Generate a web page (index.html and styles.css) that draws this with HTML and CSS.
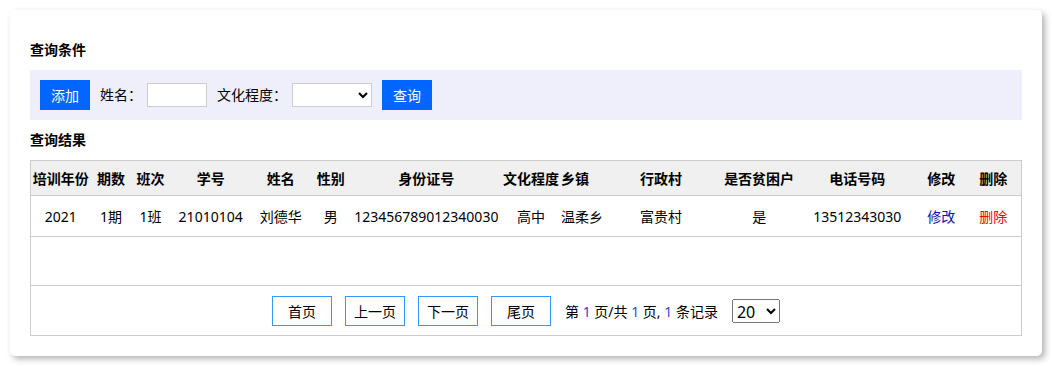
FILE: index.html
```html
<!DOCTYPE html>
<html lang="zh-CN">
<head>
  <meta charset="UTF-8">
  <title>学员查询</title>
  <link rel="stylesheet" href="styles.css">
</head>
<body>

    <!-- 卡片 -->
    <div class="card">

        <h3 class="title">查询条件</h3>

        <!-- 查询条件 -->
        <div class="search-bar">
            <button class="btn-blue">添加</button>
            <label class="lbl">姓名：</label>
            <input type="text" class="txt-name">
            <label class="lbl">文化程度：</label>
            <select class="sel-edu">
                <option></option>
                <option>小学</option>
                <option>初中</option>
                <option>高中</option>
            </select>
            <button class="btn-blue">查询</button>
        </div>

        <h3 class="title">查询结果</h3>

        <!-- 查询结果 -->
        <table class="grid">
            <colgroup>
                <col style="width:60px">
                <col style="width:41px">
                <col style="width:38px">
                <col style="width:82px">
                <col style="width:58px">
                <col style="width:42px">
                <col style="width:149px">
                <col style="width:60px">
                <col style="width:40px">
                <col style="width:120px">
                <col style="width:76px">
                <col style="width:120px">
                <col style="width:48px">
                <col style="width:56px">
            </colgroup>
            <thead>
                <tr>
                    <th>培训年份</th>
                    <th>期数</th>
                    <th>班次</th>
                    <th>学号</th>
                    <th>姓名</th>
                    <th>性别</th>
                    <th>身份证号</th>
                    <th>文化程度</th>
                    <th class="left">乡镇</th>
                    <th>行政村</th>
                    <th>是否贫困户</th>
                    <th>电话号码</th>
                    <th>修改</th>
                    <th>删除</th>
                </tr>
            </thead>
            <tbody>
                <tr class="row">
                    <td>2021</td>
                    <td>1期</td>
                    <td>1班</td>
                    <td>21010104</td>
                    <td>刘德华</td>
                    <td>男</td>
                    <td>123456789012340030</td>
                    <td>高中</td>
                    <td class="left">温柔乡</td>
                    <td>富贵村</td>
                    <td>是</td>
                    <td>13512343030</td>
                    <td><a href="#" class="lnk-edit">修改</a></td>
                    <td><a href="#" class="lnk-del">删除</a></td>
                </tr>
                <tr class="row-empty">
                    <td colspan="14"></td>
                </tr>
                <tr class="row-pager">
                    <td colspan="14">
                        <div class="pager">
                            <button class="btn-page">首页</button>
                            <button class="btn-page">上一页</button>
                            <button class="btn-page">下一页</button>
                            <button class="btn-page">尾页</button>
                            <span class="page-info">第 <em>1</em> 页/共 <em>1</em> 页, <em>1</em> 条记录</span>
                            <select class="sel-size">
                                <option>20</option>
                                <option>50</option>
                                <option>100</option>
                            </select>
                        </div>
                    </td>
                </tr>
            </tbody>
        </table>

    </div>

</body>
</html>
```

FILE: styles.css
```css
body {
  margin: 0;
  font-family: "Noto Sans", "Noto Sans CJK SC", sans-serif;
  font-size: 14px;
  color: #000;
  background-color: #fff;
}

/* 卡片 */
.card {
  margin: 10px;
  padding: 0 20px 20px;
  background-color: #fff;
  border-radius: 5px;
  box-shadow: 3px 3px 6px rgba(0, 0, 0, 0.3);
}

.title {
  margin: 0;
  padding: 30px 0 10px;
  font-size: 14px;
  line-height: 20px;
  font-weight: bold;
}

.search-bar + .title {
  padding-top: 10px;
}

/* 查询条件 */
.search-bar {
  display: flex;
  align-items: center;
  height: 50px;
  padding: 0 10px;
  box-sizing: border-box;
  background-color: #efeffc;
}

.btn-blue {
  width: 50px;
  height: 30px;
  padding: 0;
  border: none;
  background-color: #0066ff;
  color: white;
  font-family: inherit;
  font-size: 14px;
  cursor: pointer;
}

.lbl {
  margin: 0 5px 0 10px;
  line-height: 20px;
}

.txt-name {
  width: 60px;
  height: 24px;
  box-sizing: border-box;
  border: 1px solid #ccc;
  padding: 0 4px;
}

.sel-edu {
  width: 80px;
  height: 24px;
  box-sizing: border-box;
  border: 1px solid #ccc;
  border-radius: 0;
  background-color: white;
  margin-right: 10px;
}

/* 查询结果 */
.grid {
  width: 100%;
  table-layout: fixed;
  border-collapse: collapse;
  border: 1px solid #ccc;
}

.grid th {
  height: 34px;
  padding: 0;
  background-color: #f0f0f0;
  font-weight: bold;
  white-space: nowrap;
  border-bottom: 1px solid #ccc;
}

.grid td {
  padding: 0;
  text-align: center;
  white-space: nowrap;
}

.grid .left {
  text-align: left;
}

.row td {
  height: 40px;
  border-bottom: 1px solid #ccc;
}

.row-empty td {
  height: 48px;
  border-bottom: 1px solid #ccc;
}

.row-pager td {
  height: 49px;
}

.lnk-edit {
  color: #1010b0;
  text-decoration: none;
}

.lnk-del {
  color: #ff0000;
  text-decoration: none;
}

/* 分页 */
.pager {
  display: flex;
  justify-content: center;
  align-items: center;
  gap: 13px;
}

.btn-page {
  width: 60px;
  height: 30px;
  padding: 0;
  border: 1px solid #3399ff;
  background-color: white;
  color: #000;
  font-family: inherit;
  font-size: 14px;
  cursor: pointer;
}

.page-info {
  margin: 0 1px;
}

.page-info em {
  font-style: normal;
  color: #3d3dc8;
}

.sel-size {
  width: 48px;
  height: 24px;
  font-family: inherit;
  font-size: 16px;
}
```
